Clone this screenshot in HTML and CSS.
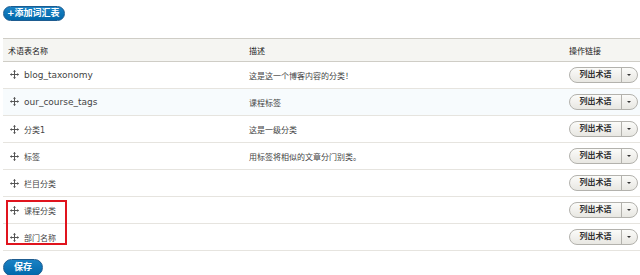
FILE: index.html
```html
<!DOCTYPE html>
<html lang="zh-CN">
<head>
  <meta charset="UTF-8">
  <title>词汇表</title>
  <link rel="stylesheet" href="styles.css">
</head>
<body>
  <div class="page">
    <a class="btn-primary btn-add" href="#">+添加词汇表</a>

    <table class="vocab-table">
      <thead>
        <tr>
          <th class="col-name">术语表名称</th>
          <th class="col-desc">描述</th>
          <th class="col-ops">操作链接</th>
        </tr>
      </thead>
      <tbody>
        <tr>
          <td class="col-name"><svg class="handle" viewBox="0 0 9 9"><path d="M4.5 0.5v8M0.5 4.5h8"/><path class="tip" d="M4.5 0L3 1.8h3zM4.5 9L3 7.2h3zM0 4.5L1.8 3v3zM9 4.5L7.2 3v3z"/></svg><span class="en">blog_taxonomy</span></td>
          <td>这是这一个博客内容的分类！</td>
          <td class="col-ops"><span class="split"><span class="split-main">列出术语</span><span class="split-toggle"></span></span></td>
        </tr>
        <tr class="hl">
          <td class="col-name"><svg class="handle" viewBox="0 0 9 9"><path d="M4.5 0.5v8M0.5 4.5h8"/><path class="tip" d="M4.5 0L3 1.8h3zM4.5 9L3 7.2h3zM0 4.5L1.8 3v3zM9 4.5L7.2 3v3z"/></svg><span class="en">our_course_tags</span></td>
          <td>课程标签</td>
          <td class="col-ops"><span class="split"><span class="split-main">列出术语</span><span class="split-toggle"></span></span></td>
        </tr>
        <tr>
          <td class="col-name"><svg class="handle" viewBox="0 0 9 9"><path d="M4.5 0.5v8M0.5 4.5h8"/><path class="tip" d="M4.5 0L3 1.8h3zM4.5 9L3 7.2h3zM0 4.5L1.8 3v3zM9 4.5L7.2 3v3z"/></svg>分类1</td>
          <td>这是一级分类</td>
          <td class="col-ops"><span class="split"><span class="split-main">列出术语</span><span class="split-toggle"></span></span></td>
        </tr>
        <tr>
          <td class="col-name"><svg class="handle" viewBox="0 0 9 9"><path d="M4.5 0.5v8M0.5 4.5h8"/><path class="tip" d="M4.5 0L3 1.8h3zM4.5 9L3 7.2h3zM0 4.5L1.8 3v3zM9 4.5L7.2 3v3z"/></svg>标签</td>
          <td>用标签将相似的文章分门别类。</td>
          <td class="col-ops"><span class="split"><span class="split-main">列出术语</span><span class="split-toggle"></span></span></td>
        </tr>
        <tr>
          <td class="col-name"><svg class="handle" viewBox="0 0 9 9"><path d="M4.5 0.5v8M0.5 4.5h8"/><path class="tip" d="M4.5 0L3 1.8h3zM4.5 9L3 7.2h3zM0 4.5L1.8 3v3zM9 4.5L7.2 3v3z"/></svg>栏目分类</td>
          <td></td>
          <td class="col-ops"><span class="split"><span class="split-main">列出术语</span><span class="split-toggle"></span></span></td>
        </tr>
        <tr>
          <td class="col-name"><svg class="handle" viewBox="0 0 9 9"><path d="M4.5 0.5v8M0.5 4.5h8"/><path class="tip" d="M4.5 0L3 1.8h3zM4.5 9L3 7.2h3zM0 4.5L1.8 3v3zM9 4.5L7.2 3v3z"/></svg>课程分类</td>
          <td></td>
          <td class="col-ops"><span class="split"><span class="split-main">列出术语</span><span class="split-toggle"></span></span></td>
        </tr>
        <tr>
          <td class="col-name"><svg class="handle" viewBox="0 0 9 9"><path d="M4.5 0.5v8M0.5 4.5h8"/><path class="tip" d="M4.5 0L3 1.8h3zM4.5 9L3 7.2h3zM0 4.5L1.8 3v3zM9 4.5L7.2 3v3z"/></svg>部门名称</td>
          <td></td>
          <td class="col-ops"><span class="split"><span class="split-main">列出术语</span><span class="split-toggle"></span></span></td>
        </tr>
      </tbody>
    </table>

    <!-- highlight box around the two new vocabularies -->
    <div class="mark"></div>

    <a class="btn-primary btn-save" href="#">保存</a>
  </div>
</body>
</html>
```

FILE: styles.css
```css
body {
  margin: 0;
  background: #fff;
  font-family: "DejaVu Sans", "Noto Sans CJK SC", sans-serif;
  font-size: 8px;
  color: #444;
}

.page {
  position: relative;
  padding: 6px 0 0 3px;
}

/* Blue pill buttons */
.btn-primary {
  display: inline-block;
  background: linear-gradient(#1a82c4, #0068ab);
  border: 1px solid #1e5c90;
  color: #fff;
  font-weight: bold;
  text-decoration: none;
  border-radius: 10px;
  line-height: 13px;
  font-size: 9px;
}

.btn-add {
  padding: 0 4px 0 3px;
}

.btn-save {
  margin-top: 8px;
  padding: 0 10px;
  line-height: 15px;
}

/* Table */
.vocab-table {
  width: 637px;
  margin-top: 17px;
  border-collapse: collapse;
}

.vocab-table th {
  background: #f5f5f2;
  border-top: 1px solid #cfcdc6;
  border-bottom: 1px solid #cfcdc6;
  height: 22px;
  text-align: left;
  font-weight: normal;
  color: #222;
  padding: 0;
}

.vocab-table td {
  height: 26px;
  border-bottom: 1px solid #e6e4df;
  padding: 0;
}

.vocab-table tr.hl td {
  background: #f7fbfd;
}

.col-name {
  width: 241px;
  padding-left: 5px !important;
}

.col-ops {
  width: 71px;
}

.en {
  font-size: 9px;
}

/* Drag handle */
.handle {
  width: 9px;
  height: 9px;
  margin: 0 5px 0 2px;
  vertical-align: -1px;
}

.handle path {
  stroke: #555;
  stroke-width: 1;
  fill: none;
}

.handle path.tip {
  stroke: none;
  fill: #555;
}

/* Split dropbutton */
.split {
  display: inline-flex;
  height: 14px;
  border: 1px solid #b3b2ad;
  border-radius: 9px;
  background: linear-gradient(#fbfbf9, #e8e7e2);
  overflow: hidden;
  vertical-align: middle;
}

.split-main {
  width: 51px;
  text-align: center;
  line-height: 14px;
  font-weight: bold;
  color: #333;
}

.split-toggle {
  position: relative;
  width: 15px;
  border-left: 1px solid #b3b2ad;
}

.split-toggle::after {
  content: "";
  position: absolute;
  left: 5px;
  top: 6px;
  border-left: 2px solid transparent;
  border-right: 2px solid transparent;
  border-top: 2px solid #333;
}

.mark {
  position: absolute;
  left: 6px;
  top: 200px;
  width: 57px;
  height: 41px;
  border: 2px solid #e0141e;
}
```
